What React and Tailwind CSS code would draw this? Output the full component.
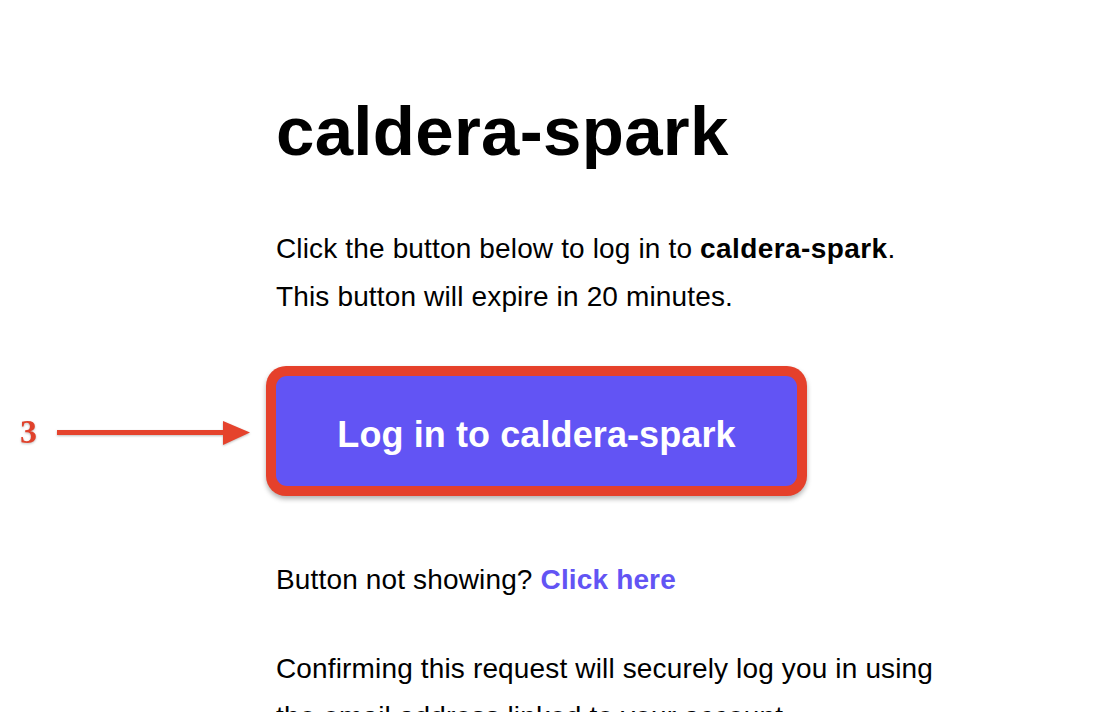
import React from "react";

const App = () => {
  return (
    <div className="relative h-[712px] w-full overflow-hidden bg-white font-['Liberation_Sans',Arial,sans-serif] text-black">
      {/* step annotation */}
      <div className="absolute left-[20px] top-[415px] flex items-center">
        <span className="font-['Liberation_Serif','Times_New_Roman',serif] text-[34px] font-bold leading-none text-[#e0412b] drop-shadow-[0_1px_1px_rgba(0,0,0,0.25)]">
          3
        </span>
        <svg
          className="ml-[20px] mt-[2px] drop-shadow-[0_1px_1px_rgba(0,0,0,0.25)]"
          width="194"
          height="28"
          viewBox="0 0 194 28"
        >
          <rect x="0" y="11" width="170" height="5" fill="#e5432d" />
          <polygon points="166,2 193,13.5 166,26" fill="#e5432d" />
        </svg>
      </div>

      <div className="ml-[276px] flex w-[680px] flex-col pt-[97px]">
        <h1 className="text-[69px] font-bold leading-none tracking-[0.3px]">
          caldera-spark
        </h1>

        <div className="mt-[59px] text-[28px] leading-[48px] tracking-[0.15px]">
          <p>
            Click the button below to log in to{" "}
            <span className="font-bold tracking-[0.4px]">caldera-spark</span>.
          </p>
          <p>This button will expire in 20 minutes.</p>
        </div>

        <div className="-ml-[10px] mt-[45px] h-[130px] w-[541px] rounded-[20px] bg-[#e5402b] p-[10px] shadow-[0_3px_5px_rgba(0,0,0,0.3)]">
          <button className="flex h-full w-full items-center justify-center rounded-[11px] bg-[#6254f4] pt-[7px] text-[36px] font-bold tracking-[0.1px] text-white">
            Log in to caldera-spark
          </button>
        </div>

        <p className="mt-[60px] text-[28px] leading-[48px] tracking-[0.15px]">
          Button not showing?{" "}
          <a className="font-bold text-[#6254f4]" href="#">
            Click here
          </a>
        </p>

        <p className="mt-[41px] text-[28px] leading-[48px] tracking-[0.15px]">
          Confirming this request will securely log you in using the email
          address linked to your account.
        </p>
      </div>
    </div>
  );
};

export default App;
